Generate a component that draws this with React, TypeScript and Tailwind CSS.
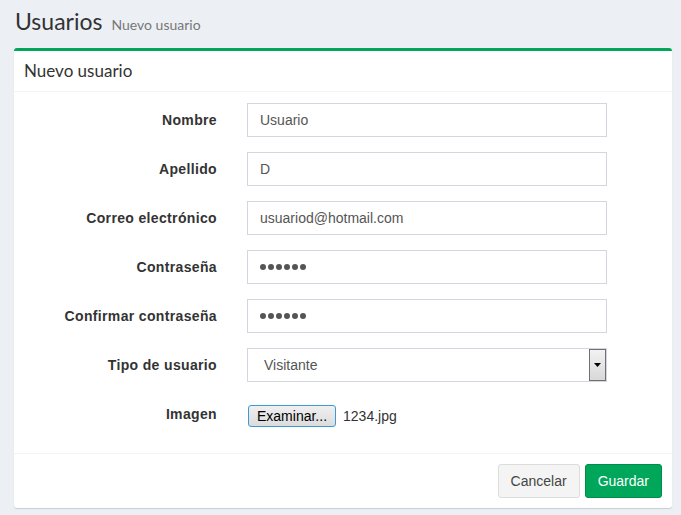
import React from "react";

const Row = ({ label, children }: { label: string; children: React.ReactNode }) => (
  <div className="flex mb-[15px]">
    <div className="w-[218px] pr-[15px] pt-[7px] text-right text-[14px] font-bold text-[#333] leading-[20px] tracking-[0.35px]">{label}</div>
    <div className="w-[390px] pl-[15px] pr-[15px]">{children}</div>
  </div>
);

const Input = ({ value, pw }: { value: string; pw?: boolean }) => (
  <div className="h-[34px] border border-[#d2d6de] bg-white px-[12px] flex items-center text-[14px] text-[#555]">
    {pw ? (
      <span className="flex gap-[2px]">
        {Array.from({ length: 6 }).map((_, i) => (
          <span key={i} className="w-[6px] h-[6px] rounded-full bg-[#555] inline-block" />
        ))}
      </span>
    ) : (
      value
    )}
  </div>
);

export default function App() {
  return (
    <div className="min-h-[515px] bg-[#ecf0f5] pt-[6px] pb-[6px]" style={{ fontFamily: '"Liberation Sans", Arial, sans-serif' }}>
      <div className="pl-[15px] flex items-baseline gap-[9px] h-[36px]" style={{ fontFamily: 'Lato, "Open Sans", sans-serif' }}>
        <span className="text-[23px] text-[#333] leading-[30px]">Usuarios</span>
        <span className="text-[14px] text-[#777]">Nuevo usuario</span>
      </div>
      <div className="mt-[6px] ml-[14px] w-[658px] bg-white border-t-[3px] border-[#00a65a] rounded-[3px] shadow-[0_1px_1px_rgba(0,0,0,0.15)]">
        <div className="h-[41px] border-b border-[#f4f4f4] pl-[10px] flex items-center" style={{ fontFamily: 'Lato, "Open Sans", sans-serif' }}>
          <span className="text-[17px] text-[#333]">Nuevo usuario</span>
        </div>
        <div className="pt-[11px] pb-[11px]">
          <Row label="Nombre"><Input value="Usuario" /></Row>
          <Row label="Apellido"><Input value="D" /></Row>
          <Row label="Correo electrónico"><Input value="usuariod@hotmail.com" /></Row>
          <Row label="Contraseña"><Input value="" pw /></Row>
          <Row label="Confirmar contraseña"><Input value="" pw /></Row>
          <Row label="Tipo de usuario">
            <div className="h-[34px] border border-[#d2d6de] bg-white flex items-center text-[14px] text-[#555] relative">
              <span className="pl-[16px] flex-1">Visitante</span>
              <div className="mr-[0px] w-[17px] h-[32px] border border-[#707070] bg-gradient-to-b from-[#f2f2f2] to-[#d8d8d8] flex items-center justify-center">
                <svg width="7" height="4" viewBox="0 0 7 4"><path d="M0 0h7L3.5 4z" fill="#000" /></svg>
              </div>
            </div>
          </Row>
          <div className="flex mb-[15px]">
            <div className="w-[218px] pr-[15px] pt-[7px] text-right text-[14px] font-bold text-[#333] leading-[20px] tracking-[0.35px]">Imagen</div>
            <div className="pl-[16px] pt-[8px] flex items-center gap-[7px]">
              <div className="h-[22px] px-[8px] border border-[#3c9bd6] rounded-[3px] bg-gradient-to-b from-[#f0f0f0] to-[#dcdcdc] text-[14px] text-black flex items-center">Examinar...</div>
              <span className="text-[14px] text-[#333]">1234.jpg</span>
            </div>
          </div>
        </div>
        <div className="border-t border-[#f4f4f4] px-[10px] py-[10px] flex justify-end gap-[5px]">
          <button className="h-[34px] px-[12px] border border-[#ddd] bg-[#f4f4f4] rounded-[3px] text-[14px] text-[#444]">Cancelar</button>
          <button className="h-[34px] px-[12px] border border-[#008d4c] bg-[#00a65a] rounded-[3px] text-[14px] text-white">Guardar</button>
        </div>
      </div>
    </div>
  );
}
